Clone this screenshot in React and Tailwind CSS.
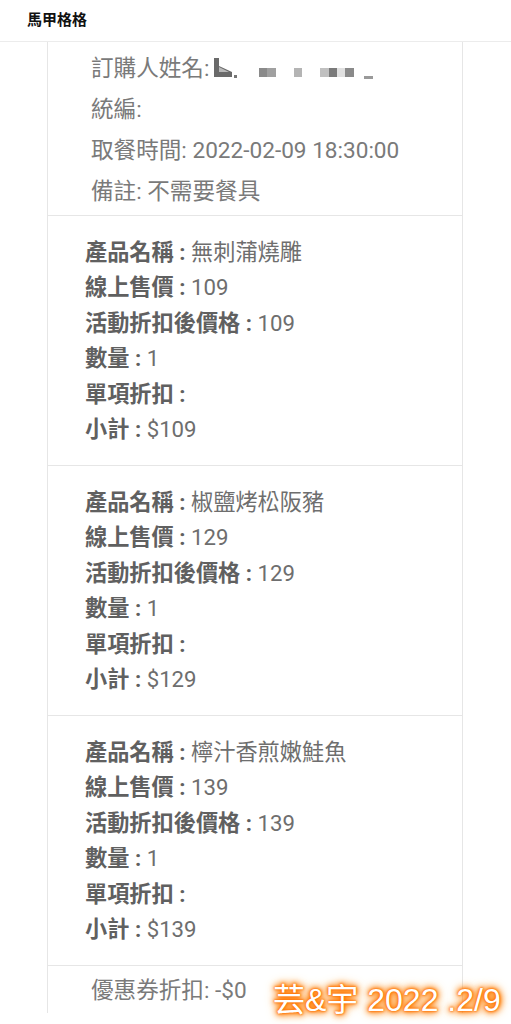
import React from "react";

const products = [
  { name: "無刺蒲燒雕", price: "109" },
  { name: "椒鹽烤松阪豬", price: "129" },
  { name: "檸汁香煎嫩鮭魚", price: "139" },
];

function Row({ label, value }) {
  return (
    <div className="whitespace-nowrap">
      <span className="font-bold text-[#606060]">{label} : </span>
      <span className="text-[#6e6e6e]">{value}</span>
    </div>
  );
}

function Redacted() {
  return (
    <svg width="165" height="24" viewBox="0 0 165 24" className="inline-block align-[-4px] ml-[3px]">
      <path d="M2 2 L7 2 L7 10 L20 16 L20 21 L2 21 Z" fill="#6a6a6a" />
      <path d="M7 11 L17 16 L7 16 Z" fill="#b8b8b8" />
      <rect x="22" y="19" width="3" height="3" fill="#777" />
      <rect x="47" y="12" width="8" height="9" fill="#8a8a8a" />
      <rect x="55" y="12" width="9" height="9" fill="#a0a0a0" />
      <rect x="82" y="12" width="8" height="9" fill="#b4b4b4" />
      <rect x="108" y="12" width="9" height="9" fill="#c0c0c0" />
      <rect x="117" y="12" width="8" height="9" fill="#7a7a7a" />
      <rect x="125" y="12" width="8" height="9" fill="#e0e0e0" />
      <rect x="133" y="12" width="9" height="9" fill="#8a8a8a" />
      <rect x="152" y="20" width="9" height="3" fill="#9a9a9a" />
    </svg>
  );
}

export default function App() {
  return (
    <div
      className="relative w-[511px] h-[1024px] bg-white overflow-hidden"
      style={{ fontFamily: "Roboto, 'Noto Sans CJK TC', 'Noto Sans', sans-serif" }}
    >
      <div className="h-[42px] border-b border-[#ececec] flex items-center pl-[27px]">
        <span className="font-bold text-[15px] text-[#111]">馬甲格格</span>
      </div>

      <div className="ml-[47px] w-[416px] border-x border-[#e6e6e6]">
        <div className="pl-[43px] pt-[5.5px] pb-[3.5px] text-[22.6px] leading-[41px] text-[#7a7a7a]">
          <div className="whitespace-nowrap">
            訂購人姓名:
            <Redacted />
          </div>
          <div>統編:</div>
          <div>取餐時間: 2022-02-09 18:30:00</div>
          <div>備註: 不需要餐具</div>
        </div>

        {products.map((p) => (
          <div
            key={p.name}
            className="border-t border-[#e6e6e6] pl-[37px] pt-[19px] pb-[17.6px] text-[22.2px] leading-[35.4px]"
          >
            <Row label="產品名稱" value={p.name} />
            <Row label="線上售價" value={p.price} />
            <Row label="活動折扣後價格" value={p.price} />
            <Row label="數量" value="1" />
            <Row label="單項折扣" value="" />
            <Row label="小計" value={`$${p.price}`} />
          </div>
        ))}

        <div className="border-t border-[#e6e6e6] pl-[43px] pt-[3.5px] pb-[2.5px] text-[22.6px] leading-[41px] text-[#7a7a7a]">
          優惠券折扣: -$0
        </div>
      </div>

      <div
        className="absolute left-[273px] top-[982px] text-[32px] leading-[36px] text-white whitespace-nowrap"
        style={{
          fontFamily: "'Liberation Sans', 'Noto Sans CJK TC', sans-serif",
          textShadow:
            "0 0 2px #ff7000, 0 0 3px #ff7000, 0 0 5px #ff7a00, 0 0 7px #ff8000, 0 0 9px #ff8a10, 0 0 12px #ffa040",
        }}
      >
        芸&amp;宇 2022 .2/9
      </div>
    </div>
  );
}
